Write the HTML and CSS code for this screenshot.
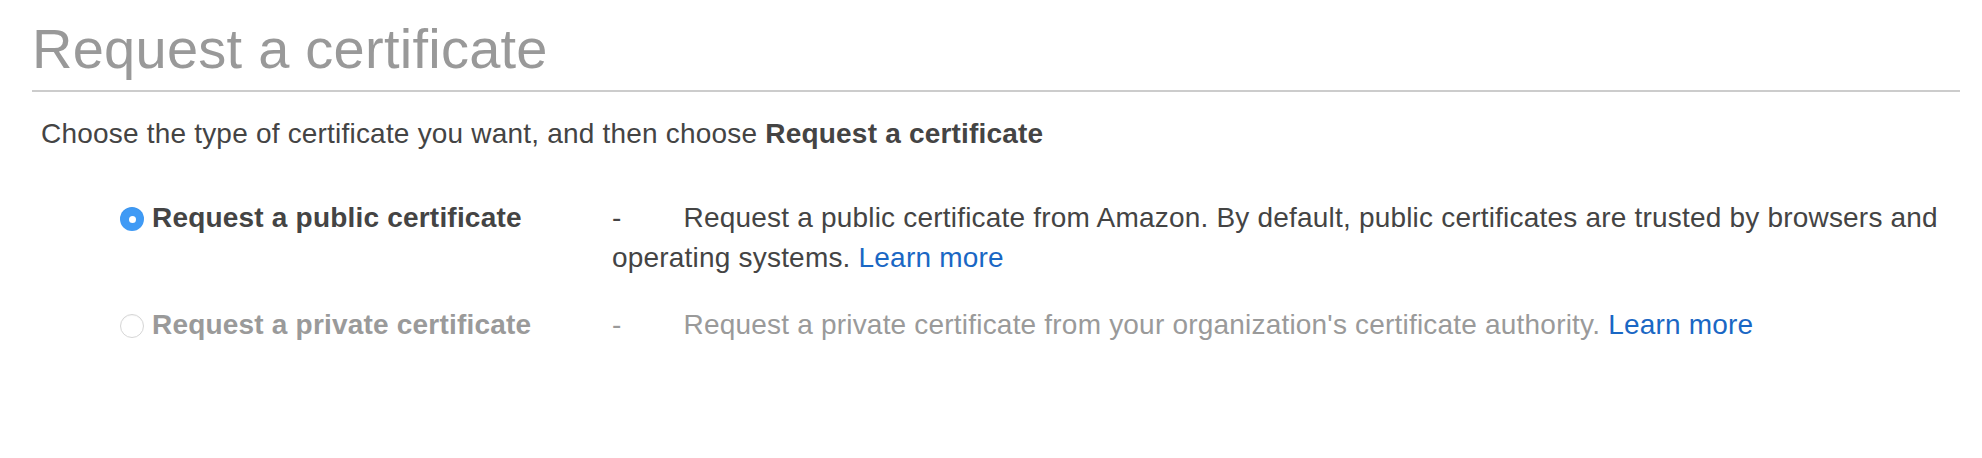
FILE: index.html
```html
<!DOCTYPE html>
<html lang="en">
<head>
<meta charset="utf-8">
<title>Request a certificate</title>
<link rel="stylesheet" href="styles.css">
</head>
<body>
<div class="page">
  <h1 class="title">Request a certificate</h1>
  <p class="intro">Choose the type of certificate you want, and then choose <b>Request a certificate</b></p>
  <div class="options">
    <div class="option">
      <span class="radio radio-on"><span class="dot"></span></span>
      <span class="label">Request a public certificate</span>
      <span class="desc"><span class="dash">-</span>Request a public certificate from Amazon. By default, public certificates are trusted by browsers and operating systems. <a class="link" href="#">Learn more</a></span>
    </div>
    <div class="option option-disabled">
      <span class="radio"></span>
      <span class="label">Request a private certificate</span>
      <span class="desc"><span class="dash">-</span>Request a private certificate from your organization's certificate authority. <a class="link" href="#">Learn more</a></span>
    </div>
  </div>
</div>
</body>
</html>
```

FILE: styles.css
```css
html, body {
  margin: 0;
  padding: 0;
  background: #ffffff;
}

body {
  font-family: "Liberation Sans", Arial, Helvetica, sans-serif;
  color: #444444;
  font-size: 28px;
  line-height: 40px;
  letter-spacing: 0.2px;
}

.page {
  padding: 0 22px 0 32px;
}

.title {
  margin: 0;
  padding: 17px 0 9px 0;
  font-size: 56px;
  line-height: 64px;
  font-weight: normal;
  letter-spacing: 0.25px;
  color: #999999;
  border-bottom: 2px solid #cccccc;
}

.intro {
  margin: 22px 0 0 9px;
}

.intro b {
  font-weight: bold;
}

.options {
  margin: 44px 0 0 88px;
  display: flex;
  flex-direction: column;
  gap: 27px;
}

.option {
  display: flex;
  align-items: flex-start;
}

.radio {
  flex: none;
  width: 24px;
  height: 24px;
  box-sizing: border-box;
  border-radius: 50%;
  border: 1px solid #d6d6d6;
  background: #ffffff;
  margin-top: 9px;
  margin-right: 8px;
  display: flex;
  align-items: center;
  justify-content: center;
  box-shadow: inset 0 1px 1px rgba(0, 0, 0, 0.04);
}

.radio-on {
  border: none;
  background: #3f9af5;
}

.dot {
  width: 7px;
  height: 7px;
  border-radius: 50%;
  background: #ffffff;
}

.label {
  flex: none;
  width: 460px;
  font-weight: bold;
  color: #444444;
}

.desc {
  flex: 1;
  color: #444444;
}

.dash {
  margin-right: 62px;
}

.link {
  color: #1a67c4;
  text-decoration: none;
}

.option-disabled .label,
.option-disabled .desc {
  color: #9a9a9a;
}
```
